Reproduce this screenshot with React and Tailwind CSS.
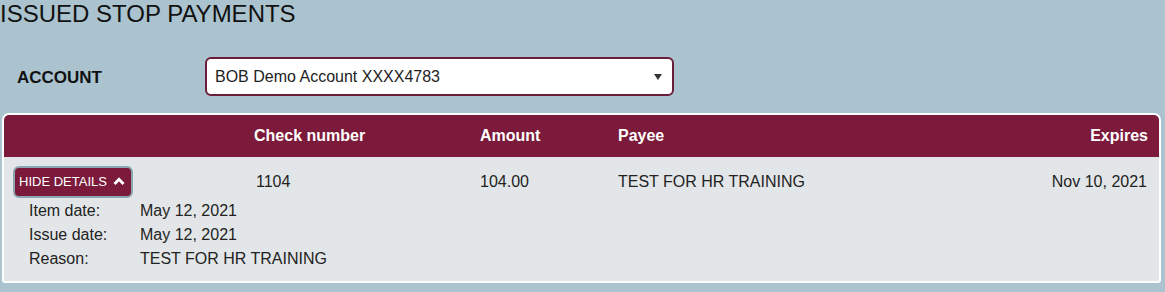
import React from 'react'

const details = [
  { label: 'Item date:', value: 'May 12, 2021' },
  { label: 'Issue date:', value: 'May 12, 2021' },
  { label: 'Reason:', value: 'TEST FOR HR TRAINING' }
]

export default function App() {
  return (
    <div className="w-[1165px] h-[292px] bg-[#aac3ce] text-[#222] overflow-hidden" style={{ fontFamily: '"Liberation Sans", Arial, sans-serif' }}>
      {/* Title */}
      <h1 className="text-[24px] leading-[28px] text-[#111]">ISSUED STOP PAYMENTS</h1>

      {/* Account selector */}
      <div className="flex items-center mt-[29px] h-[39px]">
        <div className="w-[205px] pl-[17px] text-[17px] font-bold text-[#111] pt-[2px]">ACCOUNT</div>
        <div className="w-[469px] h-[39px] bg-white border-2 border-[#6b1d3c] rounded-[6px] flex items-center justify-between pl-[8px] pr-[10px]">
          <span className="text-[16px] text-[#222]">BOB Demo Account XXXX4783</span>
          <svg width="8" height="6" viewBox="0 0 8 6"><path d="M0 0 L8 0 L4 6 Z" fill="#333" /></svg>
        </div>
      </div>

      {/* Table */}
      <div className="ml-[2px] mt-[17px] w-[1159px] border-2 border-white rounded-t-[7px] rounded-b-[3px] overflow-hidden bg-[#e3e6e8]">
        <div className="h-[42px] bg-[#7b1a3a] text-white font-bold text-[16px] flex items-center">
          <div className="w-[250px]" />
          <div className="w-[226px]">Check number</div>
          <div className="w-[138px]">Amount</div>
          <div className="flex-1">Payee</div>
          <div className="pr-[11px]">Expires</div>
        </div>
        <div className="h-[47px] flex items-center text-[16px] text-[#222] pt-[2px]">
          <div className="w-[250px] pl-[9px]">
            <button className="h-[32px] w-[120px] rounded-[6px] border-2 border-[#8aa6b0] bg-[#7b1a3a] text-white text-[13px] flex items-center gap-[6px] pl-[4px]">
              HIDE DETAILS
              <svg width="12" height="9" viewBox="0 0 12 9"><path d="M1.5 7 L6 2.2 L10.5 7" stroke="white" strokeWidth="2.8" fill="none" /></svg>
            </button>
          </div>
          <div className="w-[226px] pl-[2px]">1104</div>
          <div className="w-[138px]">104.00</div>
          <div className="flex-1">TEST FOR HR TRAINING</div>
          <div className="pr-[12px]">Nov 10, 2021</div>
        </div>
        <div className="pl-[25px] pb-[10px] -mt-[5px] text-[16px] text-[#222]">
          {details.map((d) => (
            <div key={d.label} className="flex h-[24px] items-center">
              <div className="w-[111px]">{d.label}</div>
              <div>{d.value}</div>
            </div>
          ))}
        </div>
      </div>
    </div>
  )
}
